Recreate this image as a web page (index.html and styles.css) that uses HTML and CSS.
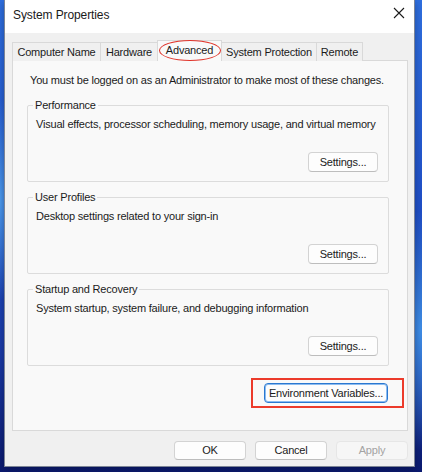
FILE: index.html
```html
<!DOCTYPE html>
<html lang="en">
<head>
<meta charset="utf-8">
<title>System Properties</title>
<link rel="stylesheet" href="styles.css">
</head>
<body>
<div class="desktop">
  <div class="window">
    <div class="titlebar">
      <span class="title">System Properties</span>
      <svg class="close" width="12" height="12" viewBox="0 0 12 12"><path d="M1 1 L11 11 M11 1 L1 11" stroke="#1a1a1a" stroke-width="1.1" fill="none"/></svg>
    </div>
    <div class="body">
      <div class="tabs">
        <div class="tab w-cn">Computer Name</div>
        <div class="tab w-hw">Hardware</div>
        <div class="tab active w-adv"><span class="circled">Advanced</span></div>
        <div class="tab w-sp">System Protection</div>
        <div class="tab w-rm">Remote</div>
      </div>
      <div class="panel">
        <p class="notice">You must be logged on as an Administrator to make most of these changes.</p>
        <fieldset class="group">
          <legend>Performance</legend>
          <p class="desc">Visual effects, processor scheduling, memory usage, and virtual memory</p>
          <div class="row-end"><button class="btn settings">Settings...</button></div>
        </fieldset>
        <fieldset class="group">
          <legend>User Profiles</legend>
          <p class="desc">Desktop settings related to your sign-in</p>
          <div class="row-end"><button class="btn settings">Settings...</button></div>
        </fieldset>
        <fieldset class="group">
          <legend>Startup and Recovery</legend>
          <p class="desc">System startup, system failure, and debugging information</p>
          <div class="row-end"><button class="btn settings">Settings...</button></div>
        </fieldset>
        <div class="env-row">
          <div class="highlight"><button class="btn env">Environment Variables...</button></div>
        </div>
      </div>
      <div class="footer">
        <button class="btn foot">OK</button>
        <button class="btn foot">Cancel</button>
        <button class="btn foot disabled">Apply</button>
      </div>
    </div>
  </div>
</div>
</body>
</html>
```
FILE: styles.css
```css
* { box-sizing: border-box; }
html, body { margin: 0; padding: 0; }
body {
  width: 422px;
  height: 472px;
  overflow: hidden;
  font-family: "Liberation Sans", Arial, sans-serif;
  font-size: 11px;
  letter-spacing: -0.2px;
  white-space: nowrap;
  color: #1b1b1b;
  background:
    radial-gradient(ellipse 30px 120px at 420px 330px, #3f8fe8 0%, rgba(63,143,232,0) 100%),
    radial-gradient(ellipse 20px 100px at 0px 200px, #4d9cf0 0%, rgba(77,156,240,0) 100%),
    linear-gradient(180deg, #2f6fe0 0%, #1f4fc8 45%, #1a3aa8 75%, #0b1a70 100%);
}
.desktop {
  display: flex;
  padding-left: 4px;
}
.window {
  width: 411px;
  height: 467px;
  border: 1px solid #7d8596;
  border-top: none;
  background: #f0f0f0;
  display: flex;
  flex-direction: column;
  box-shadow: 0 2px 8px rgba(0,0,0,0.3);
}
.titlebar {
  height: 33px;
  flex: none;
  background: #ffffff;
  display: flex;
  align-items: center;
  justify-content: space-between;
  padding: 0 9px 3px 8px;
}
.title {
  font-size: 12px;
  letter-spacing: -0.1px;
  color: #1a1a1a;
}
.close { display: block; margin-bottom: 4px; }
.body {
  flex: 1;
  display: flex;
  flex-direction: column;
  padding: 8px 6px 0 7px;
}
.tabs {
  display: flex;
  align-items: flex-end;
  height: 20px;
  flex: none;
  position: relative;
  z-index: 1;
  margin-bottom: -1px;
}
.tab {
  height: 19px;
  border: 1px solid #d9d9d9;
  border-bottom: none;
  margin-right: -1px;
  background: #f0f0f0;
  display: flex;
  align-items: center;
  justify-content: center;
  color: #1b1b1b;
  padding-bottom: 1px;
}
.tab.active {
  height: 21px;
  background: #f9f9f9;
  padding-bottom: 3px;
}
.w-cn { width: 89px; }
.w-hw { width: 58px; }
.w-adv { width: 65px; }
.w-sp { width: 96px; }
.w-rm { width: 47px; }
.circled {
  display: inline-flex;
  align-items: center;
  justify-content: center;
  width: 62px;
  height: 21px;
  border: 1.6px solid #e0342a;
  border-radius: 50%;
  margin-top: 1px;
}
.panel {
  height: 371px;
  flex: none;
  border: 1px solid #d9d9d9;
  background: #f9f9f9;
  padding: 11px 0 0 0;
  display: flex;
  flex-direction: column;
}
.notice {
  margin: 0 0 9px 17px;
  line-height: 16px;
}
.group {
  margin: 0 18px 7px 14px;
  padding: 3px 10px 9px 8px;
  border: 1px solid #dcdcdc;
  border-radius: 2px;
  min-width: 0;
}
.group legend {
  padding: 0 2px;
  margin-left: -3px;
  line-height: 16px;
}
.desc {
  margin: 0;
  line-height: 16px;
}
.row-end {
  display: flex;
  justify-content: flex-end;
  margin-top: 20px;
}
.btn {
  font-family: inherit;
  font-size: 11px;
  letter-spacing: inherit;
  color: #1b1b1b;
  background: #fdfdfd;
  border: 1px solid #d3d3d3;
  border-bottom-color: #bdbdbd;
  border-radius: 4px;
  padding: 0;
  height: 20px;
  line-height: 17px;
  white-space: nowrap;
}
.settings { width: 70px; }
.env-row {
  display: flex;
  justify-content: flex-end;
  margin: 5px 3px 0 0;
}
.highlight {
  border: 2px solid #ec3b2b;
  padding: 3px 14px 3px 11px;
  display: flex;
}
.env {
  width: 124px;
  border: 1px solid #2b78d0;
  box-shadow: inset 0 0 0 1px #8cbcf0;
}
.footer {
  display: flex;
  justify-content: flex-end;
  gap: 9px;
  padding-top: 10px;
}
.foot { width: 72px; height: 19px; }
.foot.disabled {
  color: #a3a3a3;
  background: #f6f6f6;
  border-color: #e6e6e6;
}
```
